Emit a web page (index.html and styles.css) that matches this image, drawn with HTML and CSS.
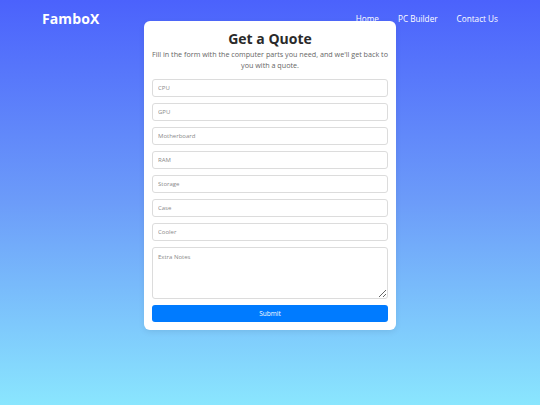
FILE: index.html
```html
<!DOCTYPE html>
<html lang="en">
<head>
<meta charset="utf-8">
<title>FamboX - Get a Quote</title>
<link rel="stylesheet" href="styles.css">
</head>
<body>
<header class="site-header">
  <div class="logo">FamboX</div>
  <nav class="nav">
    <a href="#" class="nav-link">Home</a>
    <a href="#" class="nav-link">PC Builder</a>
    <a href="#" class="nav-link">Contact Us</a>
  </nav>
</header>
<main class="main">
  <form class="card">
    <h1 class="title">Get a Quote</h1>
    <p class="subtitle">Fill in the form with the computer parts you need, and we'll get back to you with a quote.</p>
    <div class="fields">
      <input class="field" type="text" placeholder="CPU">
      <input class="field" type="text" placeholder="GPU">
      <input class="field" type="text" placeholder="Motherboard">
      <input class="field" type="text" placeholder="RAM">
      <input class="field" type="text" placeholder="Storage">
      <input class="field" type="text" placeholder="Case">
      <input class="field" type="text" placeholder="Cooler">
      <textarea class="field notes" placeholder="Extra Notes"></textarea>
      <button class="submit" type="button">Submit</button>
    </div>
  </form>
</main>
</body>
</html>
```
FILE: styles.css
```css
* { box-sizing: border-box; }
html, body { margin: 0; padding: 0; }
body {
  width: 540px;
  height: 405px;
  overflow: hidden;
  font-family: "Open Sans", "DejaVu Sans", sans-serif;
  background: linear-gradient(to bottom, #4b62fc 0%, #6c9cf9 50%, #8ae6fe 100%);
  position: relative;
}
.site-header {
  position: absolute;
  top: 0;
  left: 0;
  right: 0;
  height: 37px;
  padding: 0 42px 0 42px;
  display: flex;
  align-items: center;
  justify-content: space-between;
}
.logo {
  color: #fff;
  font-weight: 700;
  font-size: 14px;
  letter-spacing: 0.1px;
}
.nav {
  display: flex;
  gap: 19px;
}
.nav-link {
  color: #fff;
  text-decoration: none;
  font-size: 8.2px;
  font-weight: 500;
}
.main {
  display: flex;
  justify-content: center;
  padding-top: 21px;
}
.card {
  position: relative;
  z-index: 1;
  width: 252px;
  background: #fff;
  border-radius: 6px;
  padding: 8px 8px 8px 8px;
  box-shadow: 0 2px 6px rgba(0,0,0,0.08);
}
.title {
  margin: 0;
  text-align: center;
  font-size: 14px;
  line-height: 20px;
  font-weight: 700;
  color: #2a2a2a;
}
.subtitle {
  margin: 0 -4px 0 -4px;
  text-align: center;
  font-size: 7.2px;
  line-height: 11px;
  color: #666;
}
.fields {
  margin-top: 8px;
  display: flex;
  flex-direction: column;
  gap: 6px;
}
.field {
  display: block;
  width: 100%;
  height: 18px;
  margin: 0;
  border: 1px solid #dcdcdc;
  border-radius: 3px;
  padding: 0 5px;
  font-family: inherit;
  font-size: 6px;
  color: #333;
  background: #fff;
  outline: none;
}
.field::placeholder { color: #8a8a8a; }
.notes {
  height: 52px;
  padding: 5px 5px;
  resize: vertical;
}
.submit {
  display: block;
  width: 100%;
  height: 17px;
  border: none;
  border-radius: 3px;
  background: #007bff;
  color: #fff;
  font-family: inherit;
  font-size: 6.5px;
  cursor: pointer;
}
```
